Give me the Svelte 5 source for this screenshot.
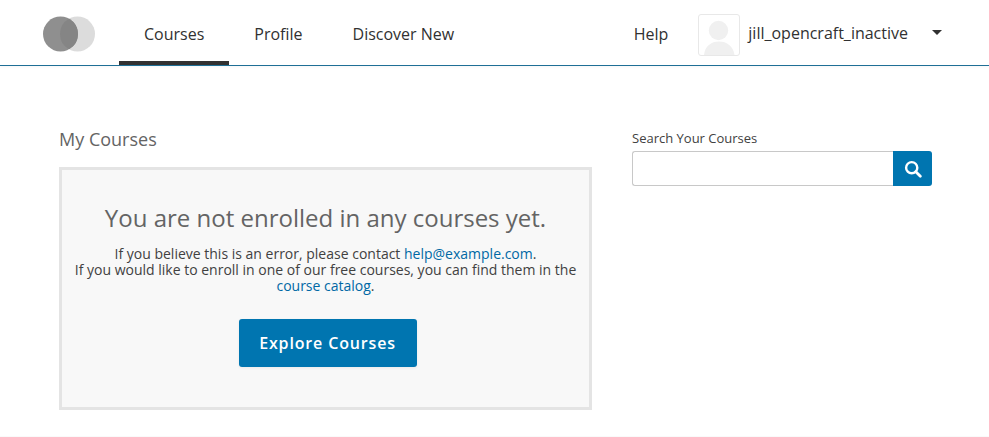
<script>
  const nav = [
    { label: 'Courses', active: true },
    { label: 'Profile', active: false },
    { label: 'Discover New', active: false }
  ];
</script>

<div class="page">
  <header class="header">
    <svg class="logo" width="54" height="38" viewBox="0 0 54 38" aria-hidden="true">
      <circle cx="34.5" cy="19" r="17.5" fill="#dcdcdc" />
      <circle cx="17.5" cy="19" r="17.5" fill="#8f8f8f" />
      <path d="M26 3.7 A17.5 17.5 0 0 1 26 34.3 A17.5 17.5 0 0 1 26 3.7 Z" fill="#858585" />
    </svg>
    <nav class="tabs">
      {#each nav as item}
        <a class="tab" class:active={item.active} href="#top">{item.label}</a>
      {/each}
    </nav>
    <div class="right">
      <a class="help" href="#top">Help</a>
      <div class="avatar">
        <svg width="40" height="40" viewBox="0 0 40 40" aria-hidden="true">
          <circle cx="19.5" cy="15.5" r="9.7" fill="#f0f0f0" />
          <path d="M5 40 C6 31 12 26.5 20 26.5 C28 26.5 34 31 35.5 40 Z" fill="#f0f0f0" />
        </svg>
      </div>
      <span class="user">jill_opencraft_inactive</span>
      <span class="caret"></span>
    </div>
  </header>

  <main class="main">
    <section class="courses">
      <h2 class="title">My Courses</h2>
      <div class="empty">
        <h3 class="headline">You are not enrolled in any courses yet.</h3>
        <p class="copy">
          If you believe this is an error, please contact <a href="#top">help@example.com</a>.<br />
          If you would like to enroll in one of our free courses, you can find them in the <a href="#top">course catalog</a>.
        </p>
        <a class="cta" href="#top">Explore Courses</a>
      </div>
    </section>
    <aside class="search">
      <label class="search-label" for="q">Search Your Courses</label>
      <div class="search-row">
        <input id="q" class="search-input" type="text" />
        <button class="search-btn" aria-label="Search">
          <svg width="18" height="18" viewBox="0 0 18 18" aria-hidden="true">
            <circle cx="7.7" cy="7.7" r="5.6" fill="none" stroke="#fff" stroke-width="2.4" />
            <path d="M11.8 11.8 L16.3 16.3" stroke="#fff" stroke-width="2.8" stroke-linecap="round" />
          </svg>
        </button>
      </div>
    </aside>
  </main>
</div>

<style>
  :global(body) {
    margin: 0;
    background: #fff;
    font-family: "Open Sans", "Liberation Sans", sans-serif;
  }
  .page {
    width: 989px;
    height: 437px;
    overflow: hidden;
    border-bottom: 1px solid #fafafa;
    box-sizing: border-box;
  }
  a { text-decoration: none; }
  .header {
    display: flex;
    align-items: stretch;
    height: 66px;
    box-sizing: border-box;
    border-bottom: 1px solid #1f6f96;
    padding-left: 43px;
    box-shadow: 0 1px 3px rgba(0, 0, 0, 0.04);
  }
  .logo { margin-top: 15px; flex: none; }
  .tabs { display: flex; margin-left: 22px; }
  .tab {
    display: block;
    padding: 24px 25px 0;
    height: 37px;
    font-size: 16px;
    line-height: 20px;
    color: #313131;
    border-bottom: 4px solid transparent;
  }
  .tab.active { border-bottom-color: #313131; }
  .right {
    margin-left: auto;
    display: flex;
    align-items: flex-start;
    padding-right: 47px;
  }
  .help {
    font-size: 16px;
    line-height: 20px;
    color: #313131;
    margin-top: 24px;
  }
  .avatar {
    width: 40px;
    height: 40px;
    margin: 14px 0 0 30px;
    border: 1px solid #e8e8e8;
    border-radius: 3px;
    overflow: hidden;
  }
  .avatar svg { display: block; }
  .user {
    font-size: 16px;
    line-height: 20px;
    color: #313131;
    margin: 23px 0 0 8px;
  }
  .caret {
    width: 0;
    height: 0;
    margin: 30px 0 0 24px;
    border-left: 5px solid transparent;
    border-right: 5px solid transparent;
    border-top: 5px solid #313131;
  }
  .main {
    display: flex;
    padding-left: 59px;
    gap: 40px;
  }
  .courses { width: 533px; }
  .title {
    margin: 62px 0 16px;
    font-size: 18px;
    line-height: 23px;
    font-weight: 400;
    color: #646464;
  }
  .empty {
    box-sizing: border-box;
    height: 243px;
    border: 3px solid #e4e4e4;
    background: #f8f8f8;
    padding: 33px 10px 0;
    text-align: center;
  }
  .headline {
    margin: 0;
    font-size: 24px;
    line-height: 30px;
    font-weight: 400;
    color: #646464;
  }
  .copy {
    margin: 13px 0 0;
    font-size: 14px;
    line-height: 16px;
    color: #414141;
  }
  .copy a { color: #0068a5; }
  .cta {
    display: inline-block;
    margin: 25px 0 0 4px;
    width: 178px;
    height: 48px;
    line-height: 48px;
    border-radius: 3px;
    background: #0075b0;
    color: #fff;
    font-size: 16px;
    font-weight: 600;
    letter-spacing: 0.85px;
    box-shadow: 0 1px 3px rgba(0, 0, 0, 0.06);
  }
  .search { width: 300px; padding-top: 63px; }
  .search-label {
    display: block;
    font-size: 13px;
    line-height: 18px;
    color: #414141;
    margin-bottom: 4px;
  }
  .search-row { display: flex; height: 35px; }
  .search-input {
    flex: 1;
    min-width: 0;
    box-sizing: border-box;
    height: 35px;
    margin: 0;
    border: 1px solid #c8c8c8;
    border-right: none;
    border-radius: 3px 0 0 3px;
    background: #fff;
    outline: none;
  }
  .search-btn {
    width: 39px;
    height: 35px;
    padding: 0;
    border: none;
    border-radius: 0 3px 3px 0;
    background: #0075b0;
    display: flex;
    align-items: center;
    justify-content: center;
  }
</style>
